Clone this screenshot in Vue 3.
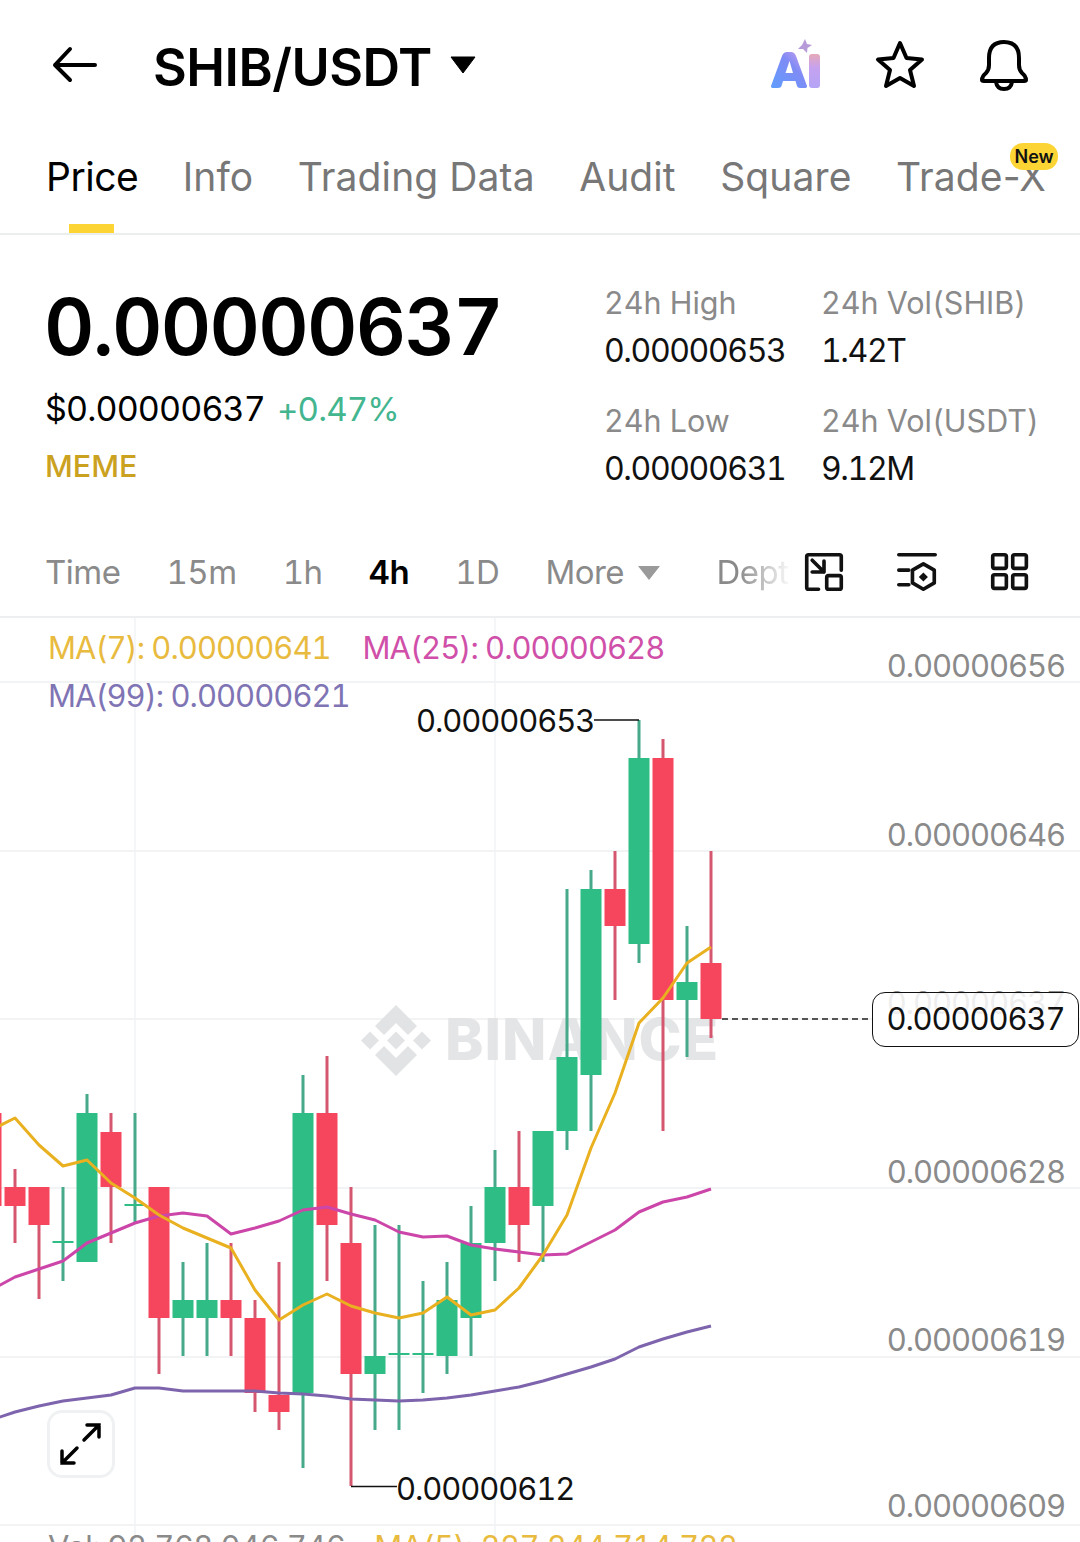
<template>
  <div class="screen">
    <!-- top bar -->
    <header class="topbar">
      <svg class="back" width="48" height="40" viewBox="0 0 48 40">
        <path d="M4 20H44M19 4L4 20L19 35" fill="none" stroke="#000" stroke-width="4" stroke-linecap="round" stroke-linejoin="round" />
      </svg>
      <div class="pair">SHIB/USDT</div>
      <svg class="caret" width="26" height="18" viewBox="0 0 26 18">
        <path d="M1 1H25L13 17Z" fill="#000" stroke="#000" stroke-width="1" stroke-linejoin="round" />
      </svg>
      <div class="top-icons">
        <svg width="54" height="52" viewBox="0 0 54 52">
          <defs>
            <linearGradient id="aiGrad" x1="0" y1="1" x2="1" y2="0">
              <stop offset="0" stop-color="#5f9dfd" />
              <stop offset="0.6" stop-color="#7f8bf5" />
              <stop offset="1" stop-color="#d3a2ee" />
            </linearGradient>
            <linearGradient id="iGrad" x1="0" y1="0" x2="0" y2="1">
              <stop offset="0" stop-color="#e6a9b8" />
              <stop offset="0.4" stop-color="#c6a2ef" />
              <stop offset="1" stop-color="#b4a4f6" />
            </linearGradient>
          </defs>
          <path d="M37 0L39 5L44 6L39.500 9L39 14L35 10L30 10L34 6Z" fill="#b69bd8" />
          <path fill-rule="evenodd" d="M3 47L14 17Q15.500 13 19 13H23Q26.500 13 28 17L39 47Q39.500 49 36 49H32Q29.500 49 29 47L27.500 42H15L13.500 47Q13 49 10 49H6Q2.500 49 3 47ZM17.500 34H25L21.500 22Z" fill="url(#aiGrad)" />
          <rect x="41" y="15" width="11" height="34" rx="3" fill="url(#iGrad)" />
        </svg>
        <svg width="52" height="50" viewBox="0 0 52 50">
          <path d="M26 3L32.500 18L48 19.500L36 30L40 46L26 38L12 46L16 30L4 19.500L19.500 18Z" fill="none" stroke="#000" stroke-width="4" stroke-linejoin="round" />
        </svg>
        <svg width="52" height="54" viewBox="0 0 52 54">
          <path d="M4 42Q4 38 8 35Q11 32 11 27V20Q11 4 26 4Q41 4 41 20V27Q41 32 44 35Q48 38 48 42Q48 43 46 43H6Q4 43 4 42Z" fill="none" stroke="#000" stroke-width="4" stroke-linejoin="round" />
          <path d="M18 44Q19 51 26 51Q33 51 34 44" fill="none" stroke="#000" stroke-width="4" />
        </svg>
      </div>
    </header>

    <!-- tabs -->
    <nav class="tabs">
      <div v-for="tab in tabs" :key="tab" class="tab" :class="{ active: tab === 'Price' }">
        {{ tab }}
        <span v-if="tab === 'Trade-X'" class="new-badge">New</span>
      </div>
    </nav>

    <!-- price summary -->
    <section class="summary">
      <div class="summary-left">
        <div class="last-price">0.00000637</div>
        <div class="fiat-row">
          <span class="fiat">$0.00000637</span>
          <span class="change">+0.47%</span>
        </div>
        <div class="tag">MEME</div>
      </div>
      <div class="stats">
        <div v-for="s in stats" :key="s.label" class="stat">
          <div class="stat-label">{{ s.label }}</div>
          <div class="stat-value">{{ s.value }}</div>
        </div>
      </div>
    </section>

    <!-- interval row -->
    <div class="intervals">
      <span v-for="i in intervals" :key="i" class="interval" :class="{ active: i === '4h' }">{{ i }}</span>
      <span class="interval more">More
        <svg width="22" height="14" viewBox="0 0 22 14"><path d="M0 0H22L11 14Z" fill="#9a9a9a" /></svg>
      </span>
      <span class="depth">Depth</span>
      <div class="tool-icons">
        <svg width="40" height="40" viewBox="0 0 44 44" fill="none" stroke="#111" stroke-width="4" stroke-linecap="round" stroke-linejoin="round">
          <path d="M16 41H5Q3 41 3 39V5Q3 3 5 3H39Q41 3 41 5V20" />
          <rect x="25" y="26" width="16" height="15" rx="2" />
          <path d="M9 9L22 22M22 10V22H9" />
        </svg>
        <svg width="40" height="40" viewBox="0 0 44 44" fill="none" stroke="#111" stroke-width="4" stroke-linecap="round" stroke-linejoin="round">
          <path d="M2 3H42M2 20H13M2 36H13" />
          <path d="M29 13L41 20V34L29 41L17 34V20Z" />
          <path d="M29 22.500L34 27.500L29 32.500L24 27.500Z" fill="#111" stroke="none" />
        </svg>
        <svg width="40" height="40" viewBox="0 0 44 44" fill="none" stroke="#111" stroke-width="4" stroke-linejoin="round">
          <rect x="3" y="3" width="15" height="15" rx="2" />
          <rect x="25" y="3" width="15" height="15" rx="2" />
          <rect x="3" y="25" width="15" height="15" rx="2" />
          <rect x="25" y="25" width="15" height="15" rx="2" />
        </svg>
      </div>
    </div>

    <!-- chart -->
    <div class="chart">
      <svg class="plot" width="1080" height="924" viewBox="0 618 1080 924">
        <line v-for="y in gridY" :key="y" x1="0" x2="1080" :y1="y" :y2="y" stroke="#eeeff1" stroke-width="1.500" />
        <line v-for="x in [135, 495]" :key="x" :x1="x" :x2="x" y1="618" y2="1542" stroke="#f2f3f4" stroke-width="1.500" />

        <!-- watermark -->
        <g fill="#e2e3e4">
          <path d="M396 1005L417 1026L408 1035L396 1023L384 1035L375 1026Z" />
          <path d="M396 1076L417 1055L408 1046L396 1058L384 1046L375 1055Z" />
          <path d="M361 1040.500L370 1031.500L379 1040.500L370 1049.500Z" />
          <path d="M413 1040.500L422 1031.500L431 1040.500L422 1049.500Z" />
          <path d="M396 1031.500L405 1040.500L396 1049.500L387 1040.500Z" />
          <text x="445" y="1060" class="watermark">BINANCE</text>
        </g>

        <!-- candles -->
        <g v-for="c in candles" :key="c.x">
          <line :x1="c.x" :x2="c.x" :y1="c.hi" :y2="c.lo" :stroke="wickColor(c)" stroke-width="3" />
          <rect :x="c.x - 10.500" :y="c.top" width="21" :height="c.bottom - c.top" :fill="bodyColor(c)" />
        </g>

        <!-- moving averages -->
        <polyline :points="ma99" fill="none" stroke="#7d64ad" stroke-width="3" stroke-linejoin="round" />
        <polyline :points="ma25" fill="none" stroke="#cc45a8" stroke-width="3" stroke-linejoin="round" />
        <polyline :points="ma7" fill="none" stroke="#e9b020" stroke-width="3" stroke-linejoin="round" />

        <!-- high / low markers -->
        <path d="M594 720H639" stroke="#111" stroke-width="1.500" fill="none" />
        <path d="M351 1486.500H397" stroke="#111" stroke-width="1.500" fill="none" />
        <text x="416" y="732" class="mark">0.00000653</text>
        <text x="396" y="1500" class="mark">0.00000612</text>

        <!-- last price -->
        <line x1="722" x2="872" y1="1019" y2="1019" stroke="#222" stroke-width="1.500" stroke-dasharray="6 4" />
      </svg>

      <div class="legend">
        <div class="legend-row">
          <span class="ma7">MA(7): 0.00000641</span>
          <span class="ma25">MA(25): 0.00000628</span>
        </div>
        <div class="legend-row">
          <span class="ma99">MA(99): 0.00000621</span>
        </div>
      </div>

      <span v-for="a in axis" :key="a.text + a.y" class="axis-label" :style="{ top: a.y - 618 + 'px' }">{{ a.text }}</span>

      <div class="last-tag">0.00000637</div>

      <button class="expand">
        <svg width="46" height="46" viewBox="0 0 46 46" fill="none" stroke="#000" stroke-width="3.500" stroke-linecap="round" stroke-linejoin="miter">
          <path d="M26 19L41 4M29 4H41V16" />
          <path d="M19 27L4 42M4 30V42H16" />
        </svg>
      </button>

      <div class="volume">
        <span class="vol-main">Vol: 92,768,046,746</span>
        <span class="vol-ma">MA(5): 227,244,714,722</span>
      </div>
    </div>
  </div>
</template>

<script setup>
const tabs = ['Price', 'Info', 'Trading Data', 'Audit', 'Square', 'Trade-X']

const stats = [
  { label: '24h High', value: '0.00000653' },
  { label: '24h Vol(SHIB)', value: '1.42T' },
  { label: '24h Low', value: '0.00000631' },
  { label: '24h Vol(USDT)', value: '9.12M' }
]

const intervals = ['Time', '15m', '1h', '4h', '1D']

const gridY = [682, 851, 1019, 1188, 1357, 1525]

const axis = [
  { text: '0.00000656', y: 647 },
  { text: '0.00000646', y: 816 },
  { text: '0.00000628', y: 1153 },
  { text: '0.00000619', y: 1321 },
  { text: '0.00000609', y: 1487 },
  { text: '0.00000637', y: 984 }
]

// x, wick high, body top, body bottom, wick low, up (green)
const raw = [
  [-9, 1113, 1113, 1206, 1243, 0],
  [15, 1169, 1187, 1206, 1243, 0],
  [39, 1187, 1187, 1225, 1299, 0],
  [63, 1187, 1241, 1243, 1281, 1],
  [87, 1094, 1113, 1262, 1262, 1],
  [111, 1113, 1132, 1187, 1243, 0],
  [135, 1113, 1204, 1206, 1222, 1],
  [159, 1187, 1187, 1318, 1374, 0],
  [183, 1262, 1300, 1318, 1356, 1],
  [207, 1243, 1300, 1318, 1356, 1],
  [231, 1243, 1300, 1318, 1356, 0],
  [255, 1300, 1318, 1393, 1412, 0],
  [279, 1262, 1395, 1412, 1430, 0],
  [303, 1075, 1113, 1393, 1468, 1],
  [327, 1056, 1113, 1225, 1281, 0],
  [351, 1187, 1243, 1374, 1486, 0],
  [375, 1225, 1356, 1374, 1430, 1],
  [399, 1225, 1353, 1355, 1430, 1],
  [423, 1281, 1353, 1355, 1393, 1],
  [447, 1262, 1300, 1356, 1374, 1],
  [471, 1206, 1243, 1318, 1356, 1],
  [495, 1150, 1187, 1243, 1281, 1],
  [519, 1131, 1187, 1225, 1262, 0],
  [543, 1131, 1131, 1206, 1262, 1],
  [567, 889, 1057, 1131, 1150, 1],
  [591, 870, 889, 1075, 1131, 1],
  [615, 851, 889, 926, 1000, 0],
  [639, 720, 758, 944, 963, 1],
  [663, 739, 758, 1000, 1131, 0],
  [687, 926, 982, 1000, 1057, 1],
  [711, 851, 963, 1019, 1038, 0]
]

const candles = raw.map(([x, hi, top, bottom, lo, up]) => ({ x, hi, top, bottom, lo, up }))

function bodyColor(c) {
  return c.up ? '#2ebd85' : '#f6465d'
}

function wickColor(c) {
  return c.up ? '#45a98a' : '#d4566f'
}

// y values for x = -9 + 24 * i
const toPoints = (ys) => ys.map((y, i) => `${-9 + 24 * i},${y}`).join(' ')

const ma7 = toPoints([1130, 1118, 1145, 1166, 1160, 1183, 1198, 1215, 1228, 1238, 1248, 1290, 1320, 1305, 1294, 1306, 1313, 1318, 1313, 1297, 1315, 1310, 1288, 1255, 1215, 1148, 1093, 1023, 998, 963, 947])
const ma25 = toPoints([1290, 1277, 1269, 1261, 1243, 1233, 1223, 1216, 1213, 1216, 1234, 1228, 1221, 1210, 1207, 1214, 1220, 1232, 1237, 1236, 1245, 1249, 1252, 1255, 1254, 1242, 1230, 1212, 1202, 1197, 1189])
const ma99 = toPoints([1420, 1412, 1406, 1401, 1398, 1395, 1388, 1388, 1391, 1391, 1391, 1391, 1393, 1394, 1396, 1399, 1400, 1401, 1400, 1398, 1395, 1391, 1387, 1381, 1374, 1367, 1359, 1347, 1339, 1332, 1326])
</script>

<style scoped>
.screen {
  width: 1080px;
  height: 1542px;
  overflow: hidden;
  background: #fff;
  font-family: Inter, "Liberation Sans", sans-serif;
  font-variant-numeric: tabular-nums;
  color: #000;
}

/* top bar */
.topbar {
  display: flex;
  align-items: center;
  height: 133px;
  padding: 0 50px 4px 51px;
  box-sizing: border-box;
}

.back {
  margin-right: 54px;
}

.pair {
  margin-top: 6px;
  font-size: 52px;
  font-weight: 600;
  letter-spacing: -0.5px;
}

.caret {
  margin-left: 18px;
}

.top-icons {
  margin-left: auto;
  display: flex;
  align-items: center;
  gap: 52px;
}

/* tabs */
.tabs {
  display: flex;
  gap: 44.500px;
  height: 102px;
  padding-left: 46px;
  box-sizing: border-box;
  border-bottom: 2px solid #eceded;
  white-space: nowrap;
  font-variant-numeric: normal;
}

.tab {
  position: relative;
  font-size: 39px;
  letter-spacing: 0.1px;
  line-height: 88px;
  color: #777;
}

.tab.active {
  color: #000;
  letter-spacing: -0.500px;
}

.tab.active::after {
  content: '';
  position: absolute;
  left: 23px;
  bottom: 0;
  width: 45px;
  height: 9px;
  background: #fcd535;
}

.new-badge {
  position: absolute;
  right: -12px;
  top: 10px;
  width: 48px;
  height: 27px;
  border-radius: 13px;
  background: #fcd535;
  color: #111;
  font-size: 18px;
  font-weight: 600;
  letter-spacing: 0;
  line-height: 27px;
  text-align: center;
}

/* summary */
.summary {
  display: flex;
  height: 282px;
  padding: 50px 0 0 44px;
  box-sizing: border-box;
}

.summary-left {
  width: 560px;
}

.last-price {
  font-size: 78px;
  font-weight: 600;
  line-height: 84px;
  letter-spacing: -1.700px;
}

.fiat-row {
  margin-top: 19px;
  font-size: 34px;
  line-height: 42px;
  letter-spacing: -0.850px;
  padding-left: 1px;
}

.change {
  margin-left: 12px;
  color: #43b58f;
  font-size: 33px;
}

.tag {
  margin-top: 15px;
  padding-left: 1px;
  font-size: 30.500px;
  font-weight: 500;
  line-height: 42px;
  color: #cba21f;
}

.stats {
  display: grid;
  grid-template-columns: 217px 1fr;
  row-gap: 23px;
  align-content: start;
  margin-top: -4px;
}

.stat-label {
  font-size: 30.500px;
  line-height: 44px;
  color: #8a8a8a;
}

.stat-value {
  font-size: 32px;
  letter-spacing: -1.400px;
  line-height: 51px;
  color: #111;
}

/* intervals */
.intervals {
  display: flex;
  align-items: center;
  height: 101px;
  padding: 10px 50px 0 45px;
  box-sizing: border-box;
  border-bottom: 2px solid #eeeff1;
  font-size: 33px;
  letter-spacing: -0.500px;
  color: #8a8a8a;
}

.interval {
  margin-right: 46px;
  white-space: nowrap;
}

.interval.active {
  color: #000;
  font-weight: 600;
}

.more {
  margin-right: 56px;
}

.more svg {
  margin-left: 6px;
  vertical-align: 4px;
}

.depth {
  width: 76px;
  overflow: hidden;
  white-space: nowrap;
  -webkit-mask-image: linear-gradient(90deg, #000 30%, transparent 100%);
  mask-image: linear-gradient(90deg, #000 30%, transparent 100%);
}

.tool-icons {
  display: flex;
  gap: 53px;
  margin-left: auto;
}

/* chart */
.chart {
  position: relative;
  height: 924px;
}

.plot {
  display: block;
}

.watermark {
  font-family: Inter, "Liberation Sans", sans-serif;
  font-size: 58px;
  font-weight: 800;
  letter-spacing: 1px;
  opacity: 0.9;
}

.mark {
  font-family: Inter, "Liberation Sans", sans-serif;
  font-size: 31px;
  font-variant-numeric: tabular-nums;
  letter-spacing: -1.100px;
  fill: #111;
}

.legend {
  position: absolute;
  left: 48px;
  top: 6px;
  font-size: 31px;
  letter-spacing: -1px;
  line-height: 48px;
}

.legend-row {
  display: flex;
  gap: 32px;
}

.ma7 {
  color: #e8bb3f;
}

.ma25 {
  color: #d04fa8;
}

.ma99 {
  color: #7f74b4;
}

.axis-label {
  position: absolute;
  right: 15px;
  font-size: 31px;
  letter-spacing: -1.100px;
  line-height: 38px;
  color: #8a8a8a;
}

.last-tag {
  position: absolute;
  left: 872px;
  top: 374px;
  width: 207px;
  height: 55px;
  box-sizing: border-box;
  border: 1.500px solid #111;
  border-radius: 13px;
  background: rgba(255, 255, 255, 0.85);
  font-size: 31px;
  letter-spacing: -1.100px;
  line-height: 52px;
  text-align: center;
  color: #111;
}

.expand {
  position: absolute;
  left: 47px;
  top: 792px;
  width: 68px;
  height: 68px;
  padding: 0;
  display: flex;
  align-items: center;
  justify-content: center;
  background: #fff;
  border: 3px solid #f0f1f2;
  border-radius: 15px;
}

.volume {
  position: absolute;
  left: 48px;
  top: 911px;
  font-size: 31px;
  letter-spacing: -0.600px;
  line-height: 36px;
  white-space: nowrap;
}

.vol-main {
  color: #8a8a8a;
  margin-right: 29px;
}

.vol-ma {
  color: #e8bb3f;
}
</style>
